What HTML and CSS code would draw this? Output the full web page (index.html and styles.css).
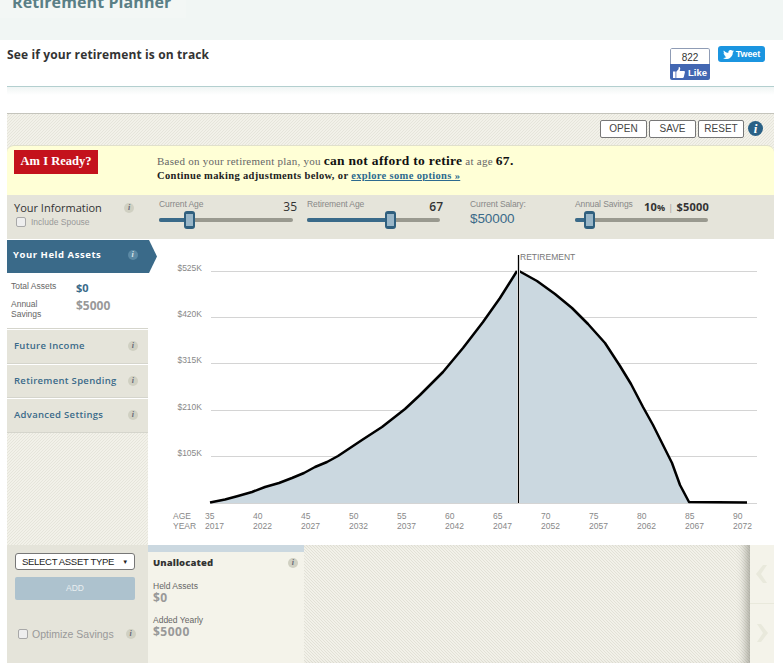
FILE: index.html
```html
<!DOCTYPE html>
<html lang="en">
<head>
<meta charset="utf-8">
<title>Retirement Planner</title>
<link rel="stylesheet" href="styles.css">
</head>
<body>
<header class="band"><div class="tab"><span class="tab-title">Retirement Planner</span></div></header>
<div class="page">
  <section class="intro">
    <h1>See if your retirement is on track</h1>
    <div class="social">
      <div class="like">
        <div class="like-count">822</div>
        <div class="like-btn"><svg width="12" height="11" viewBox="0 0 12 11"><path fill="#fff" d="M0 4.500h2.500V11H0zM3.300 4.800 5.500 2.300 5.800 0c1.300 0 1.700 1.200 1.300 2.500L6.700 3.900h4.100c.8 0 1.300.7 1.100 1.400l-1.100 4.600c-.2.700-.6 1.100-1.300 1.100H3.300z"/></svg><b>Like</b></div>
      </div>
      <div class="tweet"><svg width="11" height="9" viewBox="0 0 24 20"><path fill="#fff" d="M24 2.400c-.9.400-1.800.7-2.800.8 1-.6 1.800-1.600 2.200-2.700-1 .6-2 1-3.100 1.200A4.900 4.900 0 0 0 11.900 6.200C7.800 6 4.200 4 1.700.9.300 3.100 1 6 3.200 7.500c-.8 0-1.600-.2-2.200-.6 0 2.300 1.600 4.400 3.900 4.900-.7.200-1.500.2-2.200.1.600 2 2.400 3.400 4.600 3.400A9.900 9.900 0 0 1 0 17.800 14 14 0 0 0 21.500 5.400c1-.7 1.900-1.700 2.500-3z"/></svg><b>Tweet</b></div>
    </div>
  </section>
  <div class="intro-shadow"></div>

  <section class="app">
    <div class="toolbar">
      <button class="tool-btn btn-open">OPEN</button>
      <button class="tool-btn btn-save">SAVE</button>
      <button class="tool-btn btn-reset">RESET</button>
      <span class="help">i</span>
    </div>

    <div class="banner">
      <div class="ready">Am I Ready?</div>
      <div class="message">
        <p class="msg-one">Based on your retirement plan, you <strong>can not afford to retire</strong> at age <strong>67.</strong></p>
        <p class="msg-two">Continue making adjustments below, or <a href="#">explore some options »</a></p>
      </div>
    </div>

    <div class="infobar">
      <div class="info-title">
        <div class="info-head"><span>Your Information</span><i class="info-dot">i</i></div>
        <label class="check small-check"><span class="box"></span>Include Spouse</label>
      </div>
      <div class="field field-age">
        <div class="field-top"><span class="field-label">Current Age</span><span class="field-value">35</span></div>
        <div class="slider"><div class="fill fill-current"></div><div class="thumb"></div></div>
      </div>
      <div class="field field-ret">
        <div class="field-top"><span class="field-label">Retirement Age</span><span class="field-value">67</span></div>
        <div class="slider"><div class="fill fill-retire"></div><div class="thumb"></div></div>
      </div>
      <div class="salary">
        <div class="field-label">Current Salary:</div>
        <div class="salary-value">$50000</div>
      </div>
      <div class="field field-save">
        <div class="field-top"><span class="field-label">Annual Savings</span><span class="field-value savings-value">10<small>%</small> <em>|</em> $5000</span></div>
        <div class="slider"><div class="fill fill-savings"></div><div class="thumb"></div></div>
      </div>
    </div>

    <div class="main">
      <aside class="side">
        <div class="side-active"><span>Your Held Assets</span><i class="info-dot dark">i</i></div>
        <div class="assets">
          <div class="asset-row"><span class="asset-label">Total Assets</span><span class="asset-total">$0</span></div>
          <div class="asset-row"><span class="asset-label">Annual<br>Savings</span><span class="asset-save">$5000</span></div>
        </div>
        <div class="side-item"><span>Future Income</span><i class="info-dot">i</i></div>
        <div class="side-item"><span>Retirement Spending</span><i class="info-dot">i</i></div>
        <div class="side-item"><span>Advanced Settings</span><i class="info-dot">i</i></div>
        <div class="side-rest"></div>
      </aside>
      <div class="chart">
        <svg class="chart-svg" width="626" height="306" viewBox="148 239 626 306">
          <g class="grid">
            <line x1="211" x2="757" y1="271.500" y2="271.500"/>
            <line x1="211" x2="757" y1="317.500" y2="317.500"/>
            <line x1="211" x2="757" y1="363.500" y2="363.500"/>
            <line x1="211" x2="757" y1="410.500" y2="410.500"/>
            <line x1="211" x2="757" y1="456.500" y2="456.500"/>
            <line x1="211" x2="757" y1="503.500" y2="503.500"/>
          </g>
          <g class="ylabels">
            <text x="202" y="271">$525K</text>
            <text x="202" y="317">$420K</text>
            <text x="202" y="363">$315K</text>
            <text x="202" y="410">$210K</text>
            <text x="202" y="456">$105K</text>
          </g>
          <path class="area" d="M210 502.500 225 499.500 238 496 252 492 265 487 279 483 292 478 304 473 315 467 327 462 338 456 350 448 362 440 382 427 405 409 420 395 443 372 463 348 483 322 500 298 517 271 519 271 537 281 555 294 572 308 588 324 605 343 620 366 631 384 643 407 653 425 663 445 672 463 680 485 689 502 747 503 210 503Z"/>
          <path class="curve" d="M210 502.500 225 499.500 238 496 252 492 265 487 279 483 292 478 304 473 315 467 327 462 338 456 350 448 362 440 382 427 405 409 420 395 443 372 463 348 483 322 500 298 517 271"/>
          <path class="curve" d="M519 271 537 281 555 294 572 308 588 324 605 343 620 366 631 384 643 407 653 425 663 445 672 463 680 485 689 502 747 502.500"/>
          <line class="ret-halo" x1="518.500" x2="518.500" y1="255" y2="503"/>
          <line class="ret-line" x1="518.500" x2="518.500" y1="255" y2="503"/>
          <text class="ret-label" x="520" y="260">RETIREMENT</text>
          <g class="xlabels">
            <text x="173" y="519">AGE</text><text x="173" y="529">YEAR</text>
            <text x="205" y="519">35</text><text x="205" y="529">2017</text>
            <text x="253" y="519">40</text><text x="253" y="529">2022</text>
            <text x="301" y="519">45</text><text x="301" y="529">2027</text>
            <text x="349" y="519">50</text><text x="349" y="529">2032</text>
            <text x="397" y="519">55</text><text x="397" y="529">2037</text>
            <text x="445" y="519">60</text><text x="445" y="529">2042</text>
            <text x="493" y="519">65</text><text x="493" y="529">2047</text>
            <text x="541" y="519">70</text><text x="541" y="529">2052</text>
            <text x="589" y="519">75</text><text x="589" y="529">2057</text>
            <text x="637" y="519">80</text><text x="637" y="529">2062</text>
            <text x="685" y="519">85</text><text x="685" y="529">2067</text>
            <text x="733" y="519">90</text><text x="733" y="529">2072</text>
          </g>
        </svg>
      </div>
    </div>

    <div class="bottom">
      <div class="controls">
        <div class="select"><span>SELECT ASSET TYPE</span><span class="caret">▼</span></div>
        <div class="add">ADD</div>
        <label class="check optimize"><span class="box"></span>Optimize Savings<i class="info-dot">i</i></label>
      </div>
      <div class="card">
        <div class="card-bar"></div>
        <div class="card-body">
          <div class="card-head"><b>Unallocated</b><i class="info-dot">i</i></div>
          <div class="card-label card-first">Held Assets</div>
          <div class="card-value">$0</div>
          <div class="card-label card-second">Added Yearly</div>
          <div class="card-value">$5000</div>
        </div>
      </div>
      <div class="shelf"></div>
      <div class="pager">
        <div class="page-btn">
          <svg width="12" height="18" viewBox="0 0 12 18"><path fill="#e9e9dc" d="M11 0H7L0 9l7 9h4L5 9z"/></svg>
        </div>
        <div class="page-btn">
          <svg width="12" height="18" viewBox="0 0 12 18"><path fill="#e9e9dc" d="M1 0h4l7 9-7 9H1l6-9z"/></svg>
        </div>
      </div>
    </div>
  </section>
</div>
</body>
</html>
```

FILE: styles.css
```css
* { box-sizing: border-box; }
html, body { margin: 0; height: 663px; overflow: hidden; background: #fff; }
body { font-family: "Liberation Sans", Arial, sans-serif; color: #333; }
p, h1 { margin: 0; }

.band { height: 40px; background: #f1f6f4; overflow: hidden; }
.tab { width: 186px; height: 18px; padding-left: 12px; background: #f3f7f5; overflow: hidden; }
.tab-title { display: block; margin-top: -8px; font: bold 16px/20px "Open Sans", sans-serif; color: #5a7f86; letter-spacing: .1px; white-space: nowrap; }

.page { width: 767px; margin-left: 7px; }
.intro { height: 47px; display: flex; justify-content: space-between; border-bottom: 1px solid #b3cfcf; }
.intro h1 { font: bold 12px/16px "Open Sans", sans-serif; color: #333; margin-top: 7px; letter-spacing: .13px; }
.social { display: flex; gap: 8px; margin-top: 6px; margin-right: 9px; align-items: flex-start; }
.like { width: 40px; margin-top: 2px; height: 32px; border-radius: 2px; overflow: hidden; }
.like-count { height: 16px; padding-top: 1px; border: 1px solid #8f9cb5; border-bottom: 0; border-radius: 2px 2px 0 0; text-align: center; font-size: 10px; line-height: 15px; color: #333; background: #fff; }
.like-btn { height: 16px; background: #4267b2; color: #fff; display: flex; align-items: center; justify-content: center; gap: 3px; font-size: 9.500px; }
.tweet { width: 47px; height: 16px; background: #1b95e0; border-radius: 3px; color: #fff; display: flex; align-items: center; justify-content: center; gap: 2px; font-size: 9px; letter-spacing: -.1px; }
.intro-shadow { height: 26px; background: linear-gradient(#f0f5f4, #fff 8px); }

.app { border-top: 1px solid #c4c4bc; background: linear-gradient(135deg, #f2f1e9 25%, #e6e5db 25%, #e6e5db 50%, #f2f1e9 50%, #f2f1e9 75%, #e6e5db 75%) 0 0 / 3px 3px; }
.toolbar { height: 31px; padding: 6px 11px 0 0; display: flex; justify-content: flex-end; align-items: flex-start; gap: 2px; }
.tool-btn { height: 18px; padding: 0; border: 1px solid #777; border-radius: 2px; background: #fff; font: 10px/16px "Liberation Sans", Arial, sans-serif; color: #444; }
.btn-open { width: 47px; }
.btn-save { width: 47px; }
.btn-reset { width: 46px; }
.help { width: 15px; height: 15px; margin: 1px 0 0 2px; border-radius: 50%; background: #2a6186; color: #fff; font: italic bold 13px/15px "Liberation Serif", serif; text-align: center; }

.banner { height: 50px; display: flex; background: #ffffd6; border-top: 1px solid #e0e0cc; border-radius: 7px 7px 0 0; }
.ready { width: 84px; height: 24px; margin: 4px 0 0 7px; background: #c4121c; color: #fff; font: bold 12.500px/23px "Liberation Serif", serif; text-align: center; }
.message { margin: 7px 0 0 59px; font-family: "Liberation Serif", serif; }
.msg-one { font-size: 11px; line-height: 16px; color: #666; letter-spacing: .25px; white-space: nowrap; }
.msg-one strong { font-size: 13.500px; color: #111; letter-spacing: .3px; }
.msg-two { font-size: 10.500px; line-height: 14px; font-weight: bold; color: #222; letter-spacing: .34px; white-space: nowrap; }
.msg-two a { color: #2d6a8e; }

.infobar { height: 44px; display: flex; background: #e5e4da; }
.info-title { width: 152px; padding: 6px 0 0 7px; }
.info-head { width: 120px; display: flex; justify-content: space-between; align-items: center; font: 11px/14px "Open Sans", sans-serif; color: #333; }
.info-dot { flex: none; width: 10px; height: 10px; border-radius: 50%; background: #d0d0c2; color: #667; font: italic bold 8px/10px "Liberation Serif", serif; text-align: center; }
.info-dot.dark { background: #5b89a4; color: #dce6ea; }
.check { display: flex; align-items: center; color: #999; }
.box { display: block; width: 10px; height: 10px; border: 1px solid #a8a8a8; border-radius: 2px; background: #eee; }
.small-check { font-size: 8.500px; gap: 5px; margin: 2px 0 0 2px; }
.field { padding-top: 4px; }
.field-age { width: 134px; }
.field-ret { width: 133px; margin-left: 14px; }
.field-save { width: 133px; margin-left: 45px; }
.field-top { height: 17px; display: flex; justify-content: space-between; align-items: flex-start; }
.field-label { font-size: 8.500px; line-height: 10px; color: #888; letter-spacing: -.1px; white-space: nowrap; }
.field-value { font: 600 12px/13px "Open Sans", sans-serif; color: #333; margin-top: 1px; white-space: nowrap; }
.field-age .field-value { margin-right: -4px; font-weight: 400; }
.field-ret .field-value { margin-right: -3px; }
.savings-value { font-size: 11px; font-weight: 700; letter-spacing: .2px; margin-right: -1px; }
.savings-value small { font-size: 9px; }
.savings-value em { font-style: normal; font-weight: 400; color: #999; font-size: 9px; }
.slider { position: relative; height: 4px; margin-top: 2px; border-radius: 2px; background: #99998f; }
.fill { height: 100%; border-radius: 2px; background: #3a6a89; }
.fill-current { width: 30px; }
.fill-retire { width: 83px; }
.fill-savings { width: 14px; }
.thumb { position: absolute; top: -7px; width: 11px; height: 18px; margin-left: -5px; border-radius: 3px; background: radial-gradient(circle, #9db9ca .7px, transparent .9px) center / 2px 2px no-repeat, #2f5f7e; background-size: 2px 2px; background-repeat: repeat; background-clip: content-box, border-box; padding: 3px 2px; }
.field-age .thumb { left: 30px; }
.field-ret .thumb { left: 83px; }
.field-save .thumb { left: 14px; }
.salary { width: 60px; margin-left: 30px; padding-top: 4px; }
.salary-value { font: 13.500px/17px "Liberation Sans", sans-serif; color: #3a6a89; margin-top: 1px; letter-spacing: -.1px; }

.main { height: 306px; display: flex; background: #fff; }
.side { width: 141px; display: flex; flex-direction: column; padding-top: 1px; }
.side-active { width: 150px; height: 33px; padding: 0 5px 3px 6px; display: flex; align-items: center; justify-content: space-between; background: #3a6a89; color: #fff; font: bold 9.500px/12px "Open Sans", sans-serif; letter-spacing: .55px; clip-path: polygon(0 0, 142px 0, 100% 50%, 142px 100%, 0 100%); }
.side-active .info-dot { margin-right: 14px; }
.assets { height: 56px; padding: 8px 0 0 4px; border-bottom: 1px solid #d5d5cc; }
.asset-row { display: flex; }
.asset-row + .asset-row { margin-top: 4px; }
.asset-label { width: 65px; font-size: 8.500px; line-height: 10px; color: #666; }
.asset-total { font: bold 11px/14px "Open Sans", sans-serif; color: #3a6a89; }
.asset-save { font: bold 12px/14px "Open Sans", sans-serif; color: #999; }
.side-item { height: 33.500px; padding: 0 10px 0 7px; margin-top: 1px; display: flex; align-items: center; justify-content: space-between; background: #e5e4da; border-bottom: 1px solid #d5d5cc; font: 600 9.500px/12px "Open Sans", sans-serif; color: #3a6a89; letter-spacing: .3px; }
.side-rest { flex: 1; background: linear-gradient(135deg, #f2f1e9 25%, #e6e5db 25%, #e6e5db 50%, #f2f1e9 50%, #f2f1e9 75%, #e6e5db 75%) 0 0 / 3px 3px; }
.chart { flex: 1; }
.chart-svg { display: block; }
.grid line { stroke: #d4d4d4; stroke-width: 1; }
.ylabels text { font-size: 8.500px; fill: #888; text-anchor: end; }
.area { fill: #cbd8e0; }
.curve { fill: none; stroke: #000; stroke-width: 2.500; stroke-linejoin: round; }
.ret-halo { stroke: #fff; stroke-width: 3; }
.ret-line { stroke: #000; stroke-width: 1.300; }
.ret-label { font-size: 8.500px; fill: #777; }
.xlabels text { font-size: 8.500px; fill: #888; }

.bottom { height: 118px; display: flex; }
.controls { width: 141px; padding: 8px 0 0 8px; background: #e5e4da; }
.select { width: 120px; height: 17px; padding: 0 6px; display: flex; align-items: center; justify-content: space-between; border: 1px solid #777; border-radius: 3px; background: #fff; font-size: 9.500px; color: #222; letter-spacing: -.3px; white-space: nowrap; }
.caret { font-size: 6px; }
.add { width: 120px; height: 23px; margin-top: 7px; border-radius: 2px; background: #adc2ce; color: #e8eef0; font-size: 8.500px; line-height: 22px; text-align: center; }
.optimize { margin: 28px 0 0 3px; font-size: 10.500px; gap: 4px; white-space: nowrap; }
.optimize .info-dot { margin-left: 8px; }
.card { width: 156px; background: #f4f3ea; }
.card-bar { height: 7px; background: #cbd8e0; }
.card-body { padding: 4px 4px 0 5px; }
.card-head { display: flex; justify-content: space-between; align-items: center; font: bold 9.500px/14px "Open Sans", sans-serif; color: #333; letter-spacing: .1px; padding-right: 2px; }
.card-label { font-size: 8.500px; line-height: 10px; color: #666; }
.card-first { margin-top: 11px; }
.card-second { margin-top: 11px; }
.card-value { font: bold 12px/13px "Open Sans", sans-serif; color: #999; letter-spacing: .5px; }
.shelf { width: 446px; background: linear-gradient(45deg, #f2f1e9 25%, #e2e1d6 25%, #e2e1d6 50%, #f2f1e9 50%, #f2f1e9 75%, #e2e1d6 75%) 0 0 / 3px 3px; box-shadow: inset -10px 0 8px -6px rgba(90,90,80,.45); }
.pager { width: 24px; display: flex; flex-direction: column; background: #f4f3ea; }
.page-btn { height: 58px; display: flex; align-items: center; justify-content: center; }
.page-btn + .page-btn { border-top: 1px solid #e9e9dc; }
```
